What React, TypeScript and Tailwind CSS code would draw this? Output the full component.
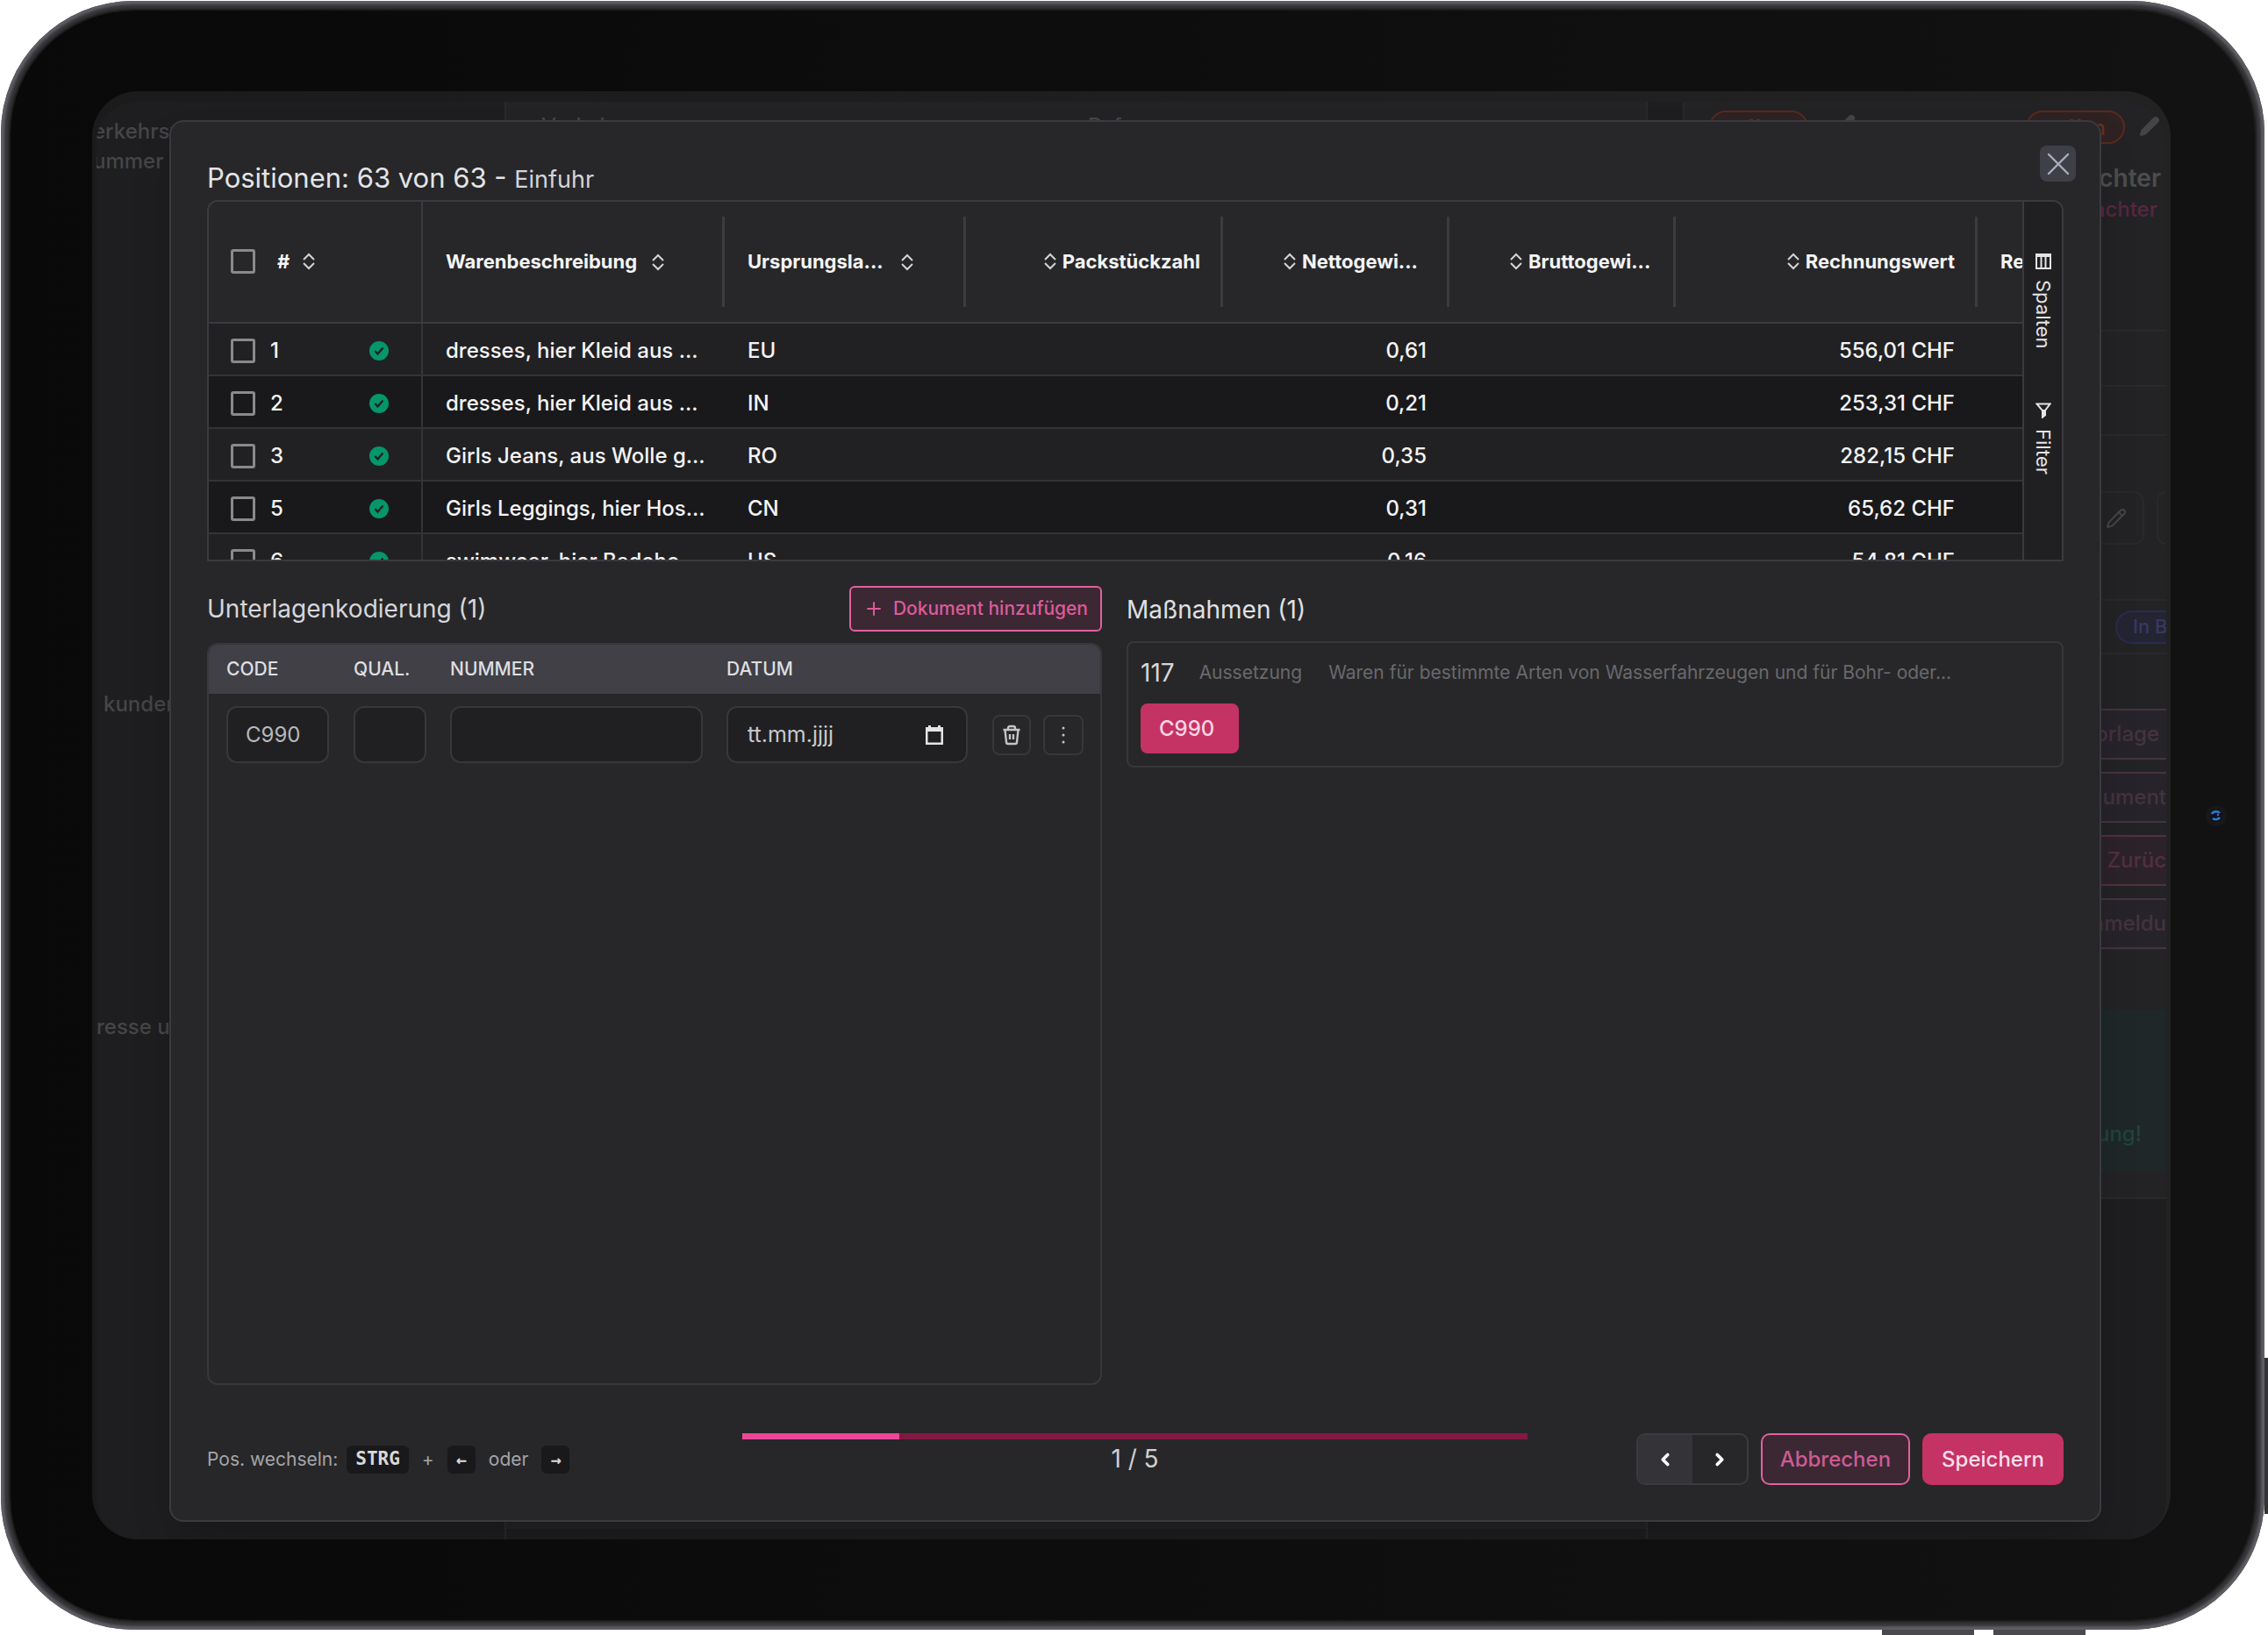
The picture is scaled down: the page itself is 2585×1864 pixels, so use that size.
import type { ReactNode } from 'react'
import { ChevronLeft, ChevronRight, Pencil, Plus } from 'lucide-react'

const positions = [
  { nr: 1, text: 'dresses, hier Kleid aus ...', origin: 'EU', net: '0,61', value: '556,01 CHF' },
  { nr: 2, text: 'dresses, hier Kleid aus ...', origin: 'IN', net: '0,21', value: '253,31 CHF' },
  { nr: 3, text: 'Girls Jeans, aus Wolle g...', origin: 'RO', net: '0,35', value: '282,15 CHF' },
  { nr: 5, text: 'Girls Leggings, hier Hos...', origin: 'CN', net: '0,31', value: '65,62 CHF' },
  { nr: 6, text: 'swimwear, hier Badeho...', origin: 'US', net: '0,16', value: '54,81 CHF' },
]

function SortIcon() {
  return (
    <svg viewBox="0 0 16 20" className="w-4 h-5 shrink-0" fill="none" stroke="#d4d4d8" strokeWidth="2">
      <path d="M2 8 8 2l6 6M2 12l6 6 6-6" />
    </svg>
  )
}

function CheckedIcon() {
  return (
    <svg viewBox="0 0 24 24" className="size-6">
      <circle cx="12" cy="12" r="11" fill="#059669" />
      <path d="m7.500 12 3 3.500 6-7" fill="none" stroke="#202022" strokeWidth="2.400" />
    </svg>
  )
}

function CloseIcon() {
  return (
    <svg viewBox="0 0 26 26" className="size-[26px]" fill="none" stroke="currentColor" strokeWidth="2.400">
      <path d="m2 2 22 22M24 2 2 24" strokeLinecap="round" />
    </svg>
  )
}

function TrashIcon() {
  return (
    <svg viewBox="0 0 24 24" className="size-6" fill="none" stroke="currentColor" strokeWidth="2.400">
      <path d="M2.500 6h19M8 6V4a2 2 0 0 1 2-2h4a2 2 0 0 1 2 2v2M4.500 6l1.500 14a2 2 0 0 0 2 2h8a2 2 0 0 0 2-2l1.500-14M10 11v6M14 11v6" />
    </svg>
  )
}

function CalendarIcon() {
  return (
    <svg viewBox="0 0 20 22" className="w-5 h-[22px]">
      <path d="M3 0h3v2h8V0h3v2h3v20H0V2h3zM2.500 7v12.500h15V7z" fill="#e4e4e7" fillRule="evenodd" />
    </svg>
  )
}

function ColumnsIcon() {
  return (
    <svg viewBox="0 0 18 18" className="size-[18px]" fill="none" stroke="#e4e4e7" strokeWidth="2">
      <path d="M1 1h16v16H1zM1 3h16M6.500 4v13M11.500 4v13" />
    </svg>
  )
}

function FilterIcon() {
  return (
    <svg viewBox="0 0 18 18" className="size-[18px]" fill="none" stroke="#e4e4e7" strokeWidth="2">
      <path d="M1.500 1.500h15L11 9v5l-3 2.500V9z" />
      <path d="M8 9h3v5l-3 2.500z" fill="#e4e4e7" />
    </svg>
  )
}

function Checkbox({ label }: { label: string }) {
  return (
    <input
      type="checkbox"
      aria-label={label}
      className="appearance-none size-7 shrink-0 rounded-[3px] border-3 border-[#8a8a8c]"
    />
  )
}

function HeaderCell({ children, last = false }: { children: ReactNode; last?: boolean }) {
  return (
    <th className="p-0 border-b-2 border-[#3a3a40] font-bold">
      <div className={`flex items-center h-[103px] pl-[26px] ${last ? '' : 'border-r-3 border-[#3c3c3e]'}`}>
        {children}
      </div>
    </th>
  )
}

function NumberHeader({ children }: { children: ReactNode }) {
  return (
    <div className="flex items-center justify-end gap-[6px] grow pr-[23px]">
      <SortIcon />
      {children}
    </div>
  )
}

function PositionsTable() {
  return (
    <div className="flex h-[412px] overflow-hidden rounded-t-xl border-2 border-[#3a3a40]">
      <div className="grow basis-0 min-w-0 overflow-hidden">
        <table className="table-fixed w-[2276px] border-separate border-spacing-0 text-2xl text-[#f4f4f5]">
          <colgroup>
            <col className="w-[244px]" />
            <col className="w-[344px]" />
            <col className="w-[275px]" />
            <col className="w-[293px]" />
            <col className="w-[258px]" />
            <col className="w-[258px]" />
            <col className="w-[344px]" />
            <col className="w-[260px]" />
          </colgroup>
          <thead>
            <tr className="h-[139px] text-[22px]">
              <th className="p-0 border-b-2 border-r-2 border-[#3a3a40] font-bold">
                <div className="flex items-center pl-[25px]">
                  <Checkbox label="Alle auswählen" />
                  <span className="ml-[25px] mr-[14px]">#</span>
                  <SortIcon />
                </div>
              </th>
              <HeaderCell>
                <span className="mr-4">Warenbeschreibung</span>
                <SortIcon />
              </HeaderCell>
              <HeaderCell>
                <span className="w-[174px] text-left">Ursprungsla...</span>
                <SortIcon />
              </HeaderCell>
              <HeaderCell>
                <NumberHeader>Packstückzahl</NumberHeader>
              </HeaderCell>
              <HeaderCell>
                <NumberHeader>
                  <span className="w-[142px] text-left">Nettogewi...</span>
                </NumberHeader>
              </HeaderCell>
              <HeaderCell>
                <NumberHeader>
                  <span className="w-[142px] text-left">Bruttogewi...</span>
                </NumberHeader>
              </HeaderCell>
              <HeaderCell>
                <NumberHeader>Rechnungswert</NumberHeader>
              </HeaderCell>
              <HeaderCell last>Rechnungswährung</HeaderCell>
            </tr>
          </thead>
          <tbody>
            {positions.map((p) => (
              <tr
                key={p.nr}
                className="h-[60px] bg-[#212123] even:bg-[#19191b] font-medium [&>td]:border-b-2 [&>td]:border-[#343437] [&>td]:pt-[3px] [&>td]:pb-0"
              >
                <td className="border-r-2 pl-[25px] pr-9">
                  <div className="flex items-center">
                    <Checkbox label={`Position ${p.nr}`} />
                    <span className="ml-[17px] mr-auto">{p.nr}</span>
                    <CheckedIcon />
                  </div>
                </td>
                <td className="pl-[26px] whitespace-nowrap">{p.text}</td>
                <td className="pl-[26px]">{p.origin}</td>
                <td />
                <td className="pr-[26px] text-right">{p.net}</td>
                <td />
                <td className="pr-[26px] text-right">{p.value}</td>
                <td />
              </tr>
            ))}
          </tbody>
        </table>
      </div>
      <div className="flex flex-col gap-[61px] w-[45px] shrink-0 pt-[59px] border-l-2 border-[#3a3a40] bg-[#202022] text-[22px] text-[#e4e4e7]">
        <button className="flex items-center gap-3 w-full justify-start [writing-mode:vertical-rl]">
          <ColumnsIcon />
          Spalten
        </button>
        <button className="flex items-center gap-3 w-full justify-start [writing-mode:vertical-rl]">
          <FilterIcon />
          Filter
        </button>
      </div>
    </div>
  )
}

const field = 'h-[65px] rounded-xl border-2 border-[#37373c] bg-[#202022] text-2xl text-[#b8b8bb] outline-none'

function Documents() {
  return (
    <section className="flex flex-col">
      <div className="flex items-center justify-between h-[52px] mb-[13px]">
        <h2 className="text-[28px] text-[#d6d6d9]">Unterlagenkodierung (1)</h2>
        <button className="flex items-center gap-[10px] h-full px-[14px] rounded-md border-2 border-[#e2609f] bg-[#3b2833] text-[21px] font-medium text-[#dc5b9a]">
          <Plus className="size-6" strokeWidth={2} />
          Dokument hinzufügen
        </button>
      </div>
      <div className="grow overflow-hidden rounded-xl border-2 border-[#37373c]">
        <table className="table-fixed w-full text-left">
          <colgroup>
            <col className="w-[165px]" />
            <col className="w-[110px]" />
            <col className="w-[315px]" />
            <col className="w-[303px]" />
            <col />
          </colgroup>
          <thead>
            <tr className="h-14 bg-[#404046] text-[21px] text-[#dedee1] [&>th]:p-0 [&>th]:font-medium">
              <th>
                <span className="pl-5">CODE</span>
              </th>
              <th>QUAL.</th>
              <th>NUMMER</th>
              <th>DATUM</th>
              <th aria-label="Aktionen" />
            </tr>
          </thead>
          <tbody>
            <tr className="[&>td]:p-0 [&>td]:pt-[14px]">
              <td>
                <input aria-label="Code" defaultValue="C990" className={`${field} w-[117px] ml-5 px-5`} />
              </td>
              <td>
                <input aria-label="Qualifikator" className={`${field} w-[83px] px-5`} />
              </td>
              <td>
                <input aria-label="Nummer" className={`${field} w-[288px] px-5`} />
              </td>
              <td>
                <div className={`${field} flex items-center w-[275px] pl-[22px] pr-[26px]`}>
                  <input
                    aria-label="Datum"
                    placeholder="tt.mm.jjjj"
                    className="w-0 grow text-[25px] outline-none placeholder:text-[#c8c8cb]"
                  />
                  <button aria-label="Kalender öffnen">
                    <CalendarIcon />
                  </button>
                </div>
              </td>
              <td>
                <div className="flex gap-[14px]">
                  <button
                    aria-label="Löschen"
                    className="grid place-items-center w-11 h-[46px] rounded-lg border-2 border-[#37373c] text-[#c4c4c7]"
                  >
                    <TrashIcon />
                  </button>
                  <button
                    aria-label="Mehr"
                    className="grid place-items-center w-[46px] h-[46px] rounded-lg border-2 border-[#37373c]"
                  >
                    <svg viewBox="0 0 4 20" className="w-1 h-5" fill="#c4c4c7">
                      <circle cx="2" cy="2" r="1.500" />
                      <circle cx="2" cy="10" r="1.500" />
                      <circle cx="2" cy="18" r="1.500" />
                    </svg>
                  </button>
                </div>
              </td>
            </tr>
          </tbody>
        </table>
      </div>
    </section>
  )
}

function Measures() {
  return (
    <section>
      <div className="flex items-center h-[54px] mb-[9px]">
        <h2 className="text-[28px] text-[#e0e0e3]">Maßnahmen (1)</h2>
      </div>
      <div className="rounded-lg border-2 border-[#37373b] p-[14px]">
        <div className="flex items-center h-10 mb-[15px] text-[21px] text-[#69696d]">
          <span className="text-[28px] text-[#d6d6d9]">117</span>
          <span className="ml-7 mr-[30px]">Aussetzung</span>
          <span className="truncate">Waren für bestimmte Arten von Wasserfahrzeugen und für Bohr- oder...</span>
        </div>
        <button className="h-[57px] pl-[21px] pr-7 rounded-lg bg-[#c53264] text-2xl font-medium text-[#fbd5e2]">
          C990
        </button>
      </div>
    </section>
  )
}

function Kbd({ children }: { children: ReactNode }) {
  return (
    <kbd className="grid place-items-center h-8 px-[10px] rounded-md bg-[#19191b] font-['DejaVu_Sans_Mono',monospace] font-bold text-[#d8d8da]">
      {children}
    </kbd>
  )
}

function Footer() {
  return (
    <footer className="grid grid-cols-[610fr_895fr_611fr] mt-[55px] h-[59px]">
      <div className="flex items-center text-[21px] text-[#a5a5a8]">
        <span className="mr-[10px]">Pos. wechseln:</span>
        <Kbd>
          <span className="text-[21px]">STRG</span>
        </Kbd>
        <span className="mx-[15px]">+</span>
        <Kbd>
          <span className="text-xl">←</span>
        </Kbd>
        <span className="mx-[15px]">oder</span>
        <Kbd>
          <span className="text-xl">→</span>
        </Kbd>
      </div>
      <div className="text-center">
        <div
          role="progressbar"
          aria-label="Seite"
          aria-valuenow={1}
          aria-valuemin={0}
          aria-valuemax={5}
          className="h-[7px] bg-[#831843]"
        >
          <div className="h-full w-1/5 bg-[#ec4899]" />
        </div>
        <p className="mt-[2px] text-[28px] leading-10 text-[#cfcfd2]">1 / 5</p>
      </div>
      <div className="flex justify-end gap-[14px] text-2xl font-medium">
        <div className="flex overflow-hidden rounded-[10px] border-2 border-[#3a3a41] text-white">
          <button aria-label="Zurück" className="grid place-items-center w-[62px] bg-[#333338]">
            <ChevronLeft className="size-[22px]" strokeWidth={4} />
          </button>
          <button aria-label="Weiter" className="grid place-items-center w-[62px]">
            <ChevronRight className="size-[22px]" strokeWidth={4} />
          </button>
        </div>
        <button className="px-5 rounded-[10px] border-2 border-[#e2609f] bg-[#3b2833] text-[#cc5b92]">Abbrechen</button>
        <button className="px-[22px] rounded-[10px] bg-[#c53264] text-[#fbdfe9]">Speichern</button>
      </div>
    </footer>
  )
}

function PositionsDialog() {
  return (
    <div
      role="dialog"
      aria-label="Positionen"
      className="relative col-start-1 row-start-1 flex flex-col mt-[21px] mb-5 ml-[83px] mr-[74px] px-[41px] pt-11 pb-10 rounded-2xl border-2 border-[#3a3a41] bg-[#272729] shadow-2xl"
    >
      <button
        aria-label="Schließen"
        className="absolute top-[27px] right-[27px] grid place-items-center size-[41px] rounded-lg bg-[#3f4047] text-[#a9aebd]"
      >
        <CloseIcon />
      </button>
      <h1 className="h-10 mb-[5px] text-[31px] leading-10 text-[#e4e4e7]">
        Positionen: 63 von 63 - <span className="text-[27px] text-[#d4d4d8]">Einfuhr</span>
      </h1>
      <PositionsTable />
      <div className="grid grid-cols-[1020fr_1068fr] gap-7 grow mt-7">
        <Documents />
        <Measures />
      </div>
      <Footer />
    </div>
  )
}

function Backdrop() {
  return (
    <div
      aria-hidden="true"
      className="col-start-1 row-start-1 flex overflow-hidden bg-[#1e1e20] text-2xl font-medium text-[#454547]"
    >
      <div className="w-[465px] shrink-0 pt-[17px]">
        <p className="-ml-1 leading-[34px]">
          erkehrsweig
          <br />
          ummer
        </p>
        <p className="ml-2 mt-[585px] leading-[34px]">kunden</p>
        <p className="mt-[334px] leading-[34px]">resse und</p>
      </div>
      <div className="flex flex-col justify-between grow border-x-2 border-[#29292b] bg-[#232325]">
        <div className="flex pt-[13px] pl-10 leading-[30px]">
          <p className="w-[623px]">Verkehr</p>
          <p>Ref.</p>
        </div>
        <div className="h-[14px] border-t-2 border-[#252527] bg-[#1e1e20]" />
      </div>
      <div className="w-10 shrink-0" />
      <div className="w-[551px] shrink-0 h-[1251px] border-l-2 border-b-2 border-[#29292b] bg-[#232325] text-right">
        <div className="flex justify-between h-[59px] pt-[10px] pl-7 pr-[7px]">
          <span className="flex gap-[30px]">
            <span className="w-[113px] h-[38px] rounded-full border-2 border-[#5a2a1d] bg-[#2e2222] text-center text-[#63311f] leading-9">
              offen
            </span>
            <Pencil className="size-6 mt-1" fill="#454547" />
          </span>
          <span className="flex gap-4">
            <span className="w-[113px] h-[38px] rounded-full border-2 border-[#5a2a1d] bg-[#2e2222] pr-5 text-right text-[#63311f] leading-9">
              offen
            </span>
            <Pencil className="size-6 mt-[6px]" fill="#454547" />
          </span>
        </div>
        <p className="pr-[6px] mt-2 text-[28px] leading-10 font-semibold text-[#4d4d4f]">Verfrachter</p>
        <p className="pr-[10px] leading-8 text-[#572741]">Frachter</p>
        <div className="mt-[121px] h-[65px] border-y-2 border-[#29292b]" />
        <div className="h-14 border-b-2 border-[#29292b]" />
        <div className="flex justify-end h-[188px] pt-[63px] border-b-2 border-[#29292b]">
          <span className="grid place-items-center justify-end w-[90px] h-[61px] pr-[18px] rounded-xl border-2 border-[#29292b]">
            <Pencil className="size-6" />
          </span>
          <span className="w-[11px] h-[61px] ml-[14px] rounded-l-xl border-2 border-r-0 border-[#29292b]" />
        </div>
        <div className="flex justify-end h-[61px] pt-[11px] border-b-2 border-[#29292b]">
          <span className="w-[58px] h-[38px] pl-[18px] overflow-hidden whitespace-nowrap rounded-l-full border-2 border-r-0 border-[#2b2b50] bg-[#242432] text-left text-[22px] leading-8 text-[#383863]">
            In B
          </span>
        </div>
        <div className="flex flex-col gap-[14px] pt-[62px] leading-[54px] text-[#43343e]">
          <p className="h-[58px] pr-2 border-y-2 border-[#44343f] bg-[#27232a]">Vorlage</p>
          <p className="h-[58px] border-y-2 border-[#44343f] bg-[#27232a]">Dokument</p>
          <p className="h-[58px] border-y-2 border-[#54303f] bg-[#2b2329] text-[#54303f]">Zurüc</p>
          <p className="h-[58px] border-y-2 border-[#44343f] bg-[#27232a]">Anmeldu</p>
        </div>
        <p className="mt-[69px] h-[184px] pt-[125px] pr-7 bg-[#1f2728] text-[#1f4539] leading-[34px]">Meldung!</p>
      </div>
    </div>
  )
}

export default function App() {
  return (
    <div className="flex min-h-screen bg-white pt-px pl-px pr-1 pb-[6px] font-['Inter',sans-serif]">
      <div className="relative flex grow min-w-0 rounded-[151px] bg-[#343437] p-[11px] shadow-[inset_0_0_3px_4px_#5e5f64]">
        {/* hardware buttons */}
        <div className="absolute -right-1 top-[1547px] h-[178px] w-1 bg-[#333336]" />
        <div className="absolute right-[204px] -bottom-[6px] h-[6px] w-[105px] bg-[#4a4a4e]" />
        <div className="absolute right-[331px] -bottom-[6px] h-[6px] w-[105px] bg-[#4a4a4e]" />
        <div className="relative flex grow min-w-0 rounded-[140px] bg-linear-to-r from-[#090909] to-[#121212] pl-[93px] pr-24 py-[92px] shadow-[0_0_2px_2px_#1c1c1d]">
          <div className="flex grow min-w-0 overflow-hidden rounded-[52px] bg-linear-to-r from-[#1b1b1b] to-[#222222] pt-3 px-[5px]">
            <div className="grid grow min-w-0 grid-cols-[minmax(0,1fr)] overflow-hidden rounded-[46px]">
              <Backdrop />
              <PositionsDialog />
            </div>
          </div>
          <div className="absolute right-8 top-[906px] grid place-items-center size-6 rounded-full bg-[#18181a]">
            <svg viewBox="0 0 14 14" className="size-[14px]">
              <circle cx="7" cy="7" r="7" fill="#0a1424" />
              <path d="M2 5a5 4 0 0 1 9-1M3 10a5 4 0 0 0 8-1" fill="none" stroke="#2f7fc4" strokeWidth="2.500" />
              <circle cx="9" cy="6" r="1.200" fill="#8a4fc0" />
            </svg>
          </div>
        </div>
      </div>
    </div>
  )
}
